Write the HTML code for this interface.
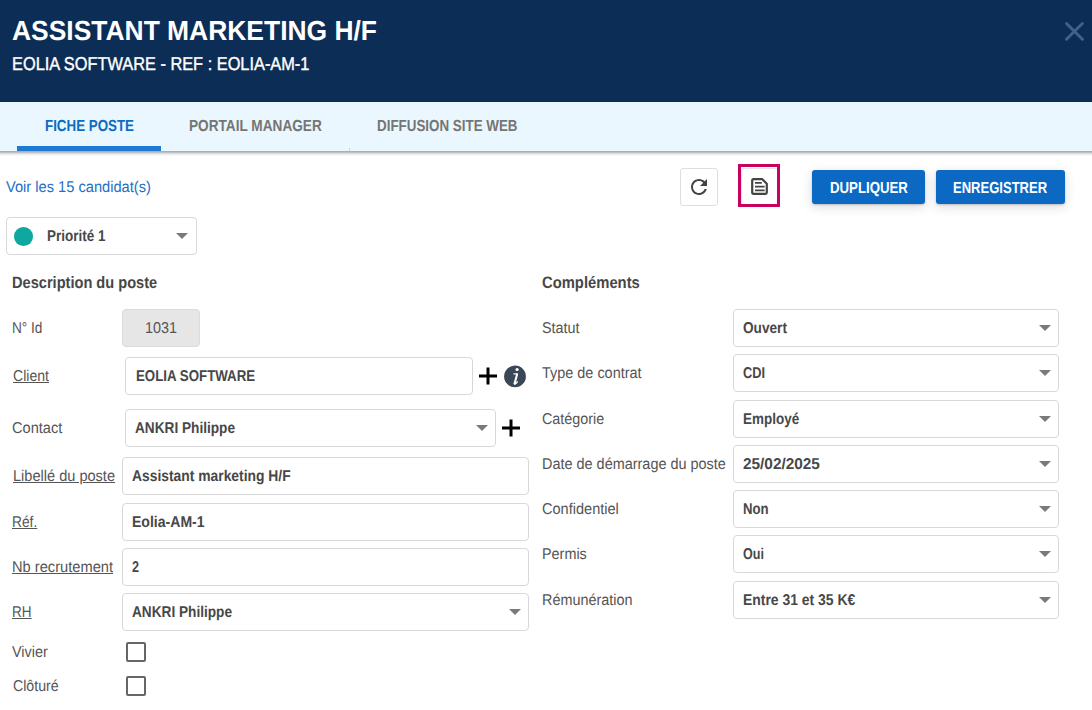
<!DOCTYPE html>
<html><head><meta charset="utf-8">
<style>
*{box-sizing:border-box;margin:0;padding:0}
html,body{width:1092px;height:710px;overflow:hidden;background:#fff;font-family:"Liberation Sans",sans-serif;color:#444;text-rendering:geometricPrecision}
.a{position:absolute;white-space:nowrap;transform-origin:0 0;line-height:normal}
#hdr{position:absolute;left:0;top:0;width:1092px;height:102px;background:#0c2d55}
#tabs{position:absolute;left:0;top:102px;width:1092px;height:49px;background:#eaf7fe}
#tabshadow{position:absolute;left:0;top:151px;width:1092px;height:5px;background:linear-gradient(#aaaaaa 0,#b4b4b4 22%,#e4e4e4 55%,#fff 100%)}
#ul{position:absolute;left:17px;top:146px;width:144px;height:5px;background:#1f7ad6}
#tdiv{position:absolute;left:349px;top:148px;width:1px;height:3px;background:#d3d3d3}
.box{position:absolute;border:1px solid #d8d8d8;border-radius:4px;background:#fff}
.caret{position:absolute;width:0;height:0;border-left:6px solid transparent;border-right:6px solid transparent;border-top:6px solid #7a7a7a}
.btn{position:absolute;background:#0b69c4;border-radius:3px;box-shadow:0 1px 2px rgba(0,0,0,.18),0 3px 12px rgba(0,0,0,.14)}
.chk{position:absolute;width:20px;height:20px;border:2px solid #666;border-radius:2px}
</style></head><body>
<div id="hdr"></div>
<div class="a t" id="title" style="left:12.00px;top:15px;font-size:27.5px;font-weight:bold;color:#fff;transform:scaleX(0.9608);">ASSISTANT MARKETING H/F</div>
<div class="a t" id="sub" style="left:12.01px;top:53px;font-size:18.7px;font-weight:normal;color:#fff;transform:scaleX(0.8750);-webkit-text-stroke:0.4px #fff;">EOLIA SOFTWARE - REF : EOLIA-AM-1</div>
<svg class="a" style="left:1060px;top:16px" width="30" height="30" viewBox="0 0 30 30"><path d="M6.5 7.5L22.4 23.2M22.4 7.5L6.5 23.2" stroke="#3f618c" stroke-width="3" stroke-linecap="round" fill="none"/></svg>
<div id="tabs"></div><div id="tabshadow"></div><div id="ul"></div><div id="tdiv"></div>
<div class="a t" id="tab1" style="left:45.00px;top:118px;font-size:16px;font-weight:bold;color:#0e6bc2;transform:scaleX(0.8344);">FICHE POSTE</div>
<div class="a t" id="tab2" style="left:189.19px;top:118px;font-size:16px;font-weight:bold;color:#757575;transform:scaleX(0.8518);">PORTAIL MANAGER</div>
<div class="a t" id="tab3" style="left:377.43px;top:118px;font-size:16px;font-weight:bold;color:#757575;transform:scaleX(0.8362);">DIFFUSION SITE WEB</div>
<div class="a t" id="voir" style="left:5.81px;top:179px;font-size:15.6px;font-weight:normal;color:#1e70c4;transform:scaleX(0.9388);">Voir les 15 candidat(s)</div>
<div class="box" style="left:680px;top:168px;width:38px;height:38px;border-color:#dedede;border-radius:3px"></div>
<svg class="a" style="left:687px;top:174.5px" width="24" height="24" viewBox="0 0 24 24"><path fill="#444" d="M17.65 6.35C16.2 4.9 14.21 4 12 4c-4.42 0-7.99 3.58-7.99 8s3.57 8 7.99 8c3.730 0 6.84-2.55 7.73-6h-2.08c-.82 2.33-3.04 4-5.65 4-3.31 0-6-2.69-6-6s2.69-6 6-6c1.66 0 3.14.69 4.22 1.78L13 11h7V4l-2.35 2.35z"/></svg>
<div class="box" style="left:741px;top:168px;width:38px;height:38px;border-color:#dfe6e6;border-radius:3px"></div>
<div class="a" style="left:738px;top:164px;width:42px;height:43px;border:3px solid #c8005e"></div>
<svg class="a" style="left:751px;top:178px" width="17" height="17" viewBox="0 0 17 17"><path d="M2.2 1.2H11.3L15.8 5.7V14.6Q15.8 15.8 14.6 15.8H2.4Q1.2 15.8 1.2 14.6V2.4Q1.2 1.2 2.4 1.2Z" fill="none" stroke="#444" stroke-width="2.2" stroke-linejoin="round"/><path d="M4 4.9H10.8M4 8.6H13.6M4 12.4H13.6" stroke="#444" stroke-width="1.6"/></svg>
<div class="btn" style="left:812px;top:170px;width:113px;height:34px"></div>
<div class="btn" style="left:936px;top:170px;width:129px;height:34px"></div>
<div class="a t" id="dup" style="left:829.82px;top:180px;font-size:16px;font-weight:bold;color:#fff;transform:scaleX(0.8259);">DUPLIQUER</div>
<div class="a t" id="enr" style="left:952.78px;top:180px;font-size:16px;font-weight:bold;color:#fff;transform:scaleX(0.8144);">ENREGISTRER</div>
<div class="box" style="left:6px;top:217px;width:191px;height:38px"></div>
<div class="a" style="left:14.2px;top:227.2px;width:18.5px;height:18.5px;border-radius:50%;background:#0fa89e"></div>
<div class="a t" id="prio" style="left:47.00px;top:228px;font-size:15.6px;font-weight:bold;color:#474747;transform:scaleX(0.8646);">Priorité 1</div>
<div class="caret" style="left:176px;top:233px"></div>
<div class="a t" id="desc" style="left:12.41px;top:274px;font-size:16.5px;font-weight:bold;color:#474747;transform:scaleX(0.8848);">Description du poste</div>
<div class="a t" id="comp" style="left:542.40px;top:274px;font-size:16.5px;font-weight:bold;color:#474747;transform:scaleX(0.8964);">Compléments</div>
<div class="a t" id="l_id" style="left:12.40px;top:320px;font-size:15.6px;font-weight:normal;color:#555;transform:scaleX(0.8741);">N° Id</div>
<div class="box" style="left:122px;top:309px;width:78px;height:38px;background:#e6e6e6;border-color:#dcdcdc"></div>
<div class="a t" id="v_id" style="left:144.59px;top:320px;font-size:15.6px;font-weight:normal;color:#555;transform:scaleX(0.9243);">1031</div>
<div class="a t" id="l_cli" style="left:12.61px;top:368px;font-size:15.6px;font-weight:normal;color:#555;transform:scaleX(0.9027);text-decoration:underline;">Client</div>
<div class="box" style="left:125px;top:357px;width:348px;height:38px"></div>
<div class="a t" id="v_cli" style="left:135.58px;top:368px;font-size:15.6px;font-weight:bold;color:#474747;transform:scaleX(0.8529);">EOLIA SOFTWARE</div>
<svg class="a" style="left:478px;top:366px" width="20" height="20" viewBox="0 0 20 20"><path d="M10 1.5V18.5M1 10H19" stroke="#000" stroke-width="3"/></svg>
<svg class="a" style="left:504px;top:365px" width="22" height="23" viewBox="0 0 22 23"><circle cx="11" cy="11.4" r="10.9" fill="#3b4757"/><circle cx="13.1" cy="4.5" r="1.6" fill="#fff"/><path d="M13.1 9.2L10.6 18.6" stroke="#fff" stroke-width="2.1" stroke-linecap="round"/><path d="M9.4 8.9H13.4" stroke="#fff" stroke-width="1.2"/><path d="M10.5 18.3Q10.5 20.2 13.4 16.9" stroke="#fff" stroke-width="1.4" fill="none" stroke-linecap="round"/></svg>
<div class="a t" id="l_con" style="left:12.39px;top:420px;font-size:15.6px;font-weight:normal;color:#555;transform:scaleX(0.9350);">Contact</div>
<div class="box" style="left:125px;top:409px;width:371px;height:38px"></div>
<div class="a t" id="v_con" style="left:135.19px;top:420px;font-size:15.6px;font-weight:bold;color:#474747;transform:scaleX(0.8747);">ANKRI Philippe</div>
<div class="caret" style="left:476px;top:425px"></div>
<svg class="a" style="left:501px;top:418px" width="20" height="20" viewBox="0 0 20 20"><path d="M10 1.5V18.5M1 10H19" stroke="#000" stroke-width="3"/></svg>
<div class="a t" id="l_lib" style="left:12.61px;top:468px;font-size:15.6px;font-weight:normal;color:#555;transform:scaleX(0.9337);text-decoration:underline;">Libellé du poste</div>
<div class="box" style="left:122px;top:457px;width:407px;height:38px"></div>
<div class="a t" id="v_lib" style="left:132.20px;top:468px;font-size:15.6px;font-weight:bold;color:#474747;transform:scaleX(0.8888);">Assistant marketing H/F</div>
<div class="a t" id="l_ref" style="left:12.40px;top:514px;font-size:15.6px;font-weight:normal;color:#555;transform:scaleX(0.8830);text-decoration:underline;">Réf.</div>
<div class="box" style="left:122px;top:503px;width:407px;height:38px"></div>
<div class="a t" id="v_ref" style="left:132.20px;top:514px;font-size:15.6px;font-weight:bold;color:#474747;transform:scaleX(0.9013);">Eolia-AM-1</div>
<div class="a t" id="l_nb" style="left:12.40px;top:559px;font-size:15.6px;font-weight:normal;color:#555;transform:scaleX(0.9399);text-decoration:underline;">Nb recrutement</div>
<div class="box" style="left:122px;top:548px;width:407px;height:38px"></div>
<div class="a t" id="v_nb" style="left:132.16px;top:559px;font-size:15.6px;font-weight:bold;color:#474747;transform:scaleX(0.8141);">2</div>
<div class="a t" id="l_rh" style="left:12.40px;top:604px;font-size:15.6px;font-weight:normal;color:#555;transform:scaleX(0.8668);text-decoration:underline;">RH</div>
<div class="box" style="left:122px;top:593px;width:407px;height:38px"></div>
<div class="a t" id="v_rh" style="left:132.19px;top:604px;font-size:15.6px;font-weight:bold;color:#474747;transform:scaleX(0.8747);">ANKRI Philippe</div>
<div class="caret" style="left:509px;top:609px"></div>
<div class="a t" id="l_viv" style="left:12.40px;top:644px;font-size:15.6px;font-weight:normal;color:#555;transform:scaleX(0.9257);">Vivier</div>
<div class="chk" style="left:126px;top:642px"></div>
<div class="a t" id="l_clo" style="left:12.79px;top:678px;font-size:15.6px;font-weight:normal;color:#555;transform:scaleX(0.9081);">Clôturé</div>
<div class="chk" style="left:126px;top:676px"></div>
<div class="a t" id="l_stat" style="left:541.82px;top:320px;font-size:15.6px;font-weight:normal;color:#555;transform:scaleX(0.9221);">Statut</div>
<div class="box" style="left:733px;top:309px;width:326px;height:38px"></div>
<div class="a t" id="v_stat" style="left:742.78px;top:320px;font-size:15.6px;font-weight:bold;color:#474747;transform:scaleX(0.8749);">Ouvert</div>
<div class="caret" style="left:1039px;top:325px"></div>
<div class="a t" id="l_type" style="left:541.80px;top:365px;font-size:15.6px;font-weight:normal;color:#555;transform:scaleX(0.9260);">Type de contrat</div>
<div class="box" style="left:733px;top:354px;width:326px;height:38px"></div>
<div class="a t" id="v_type" style="left:742.80px;top:365px;font-size:15.6px;font-weight:bold;color:#474747;transform:scaleX(0.8219);">CDI</div>
<div class="caret" style="left:1039px;top:370px"></div>
<div class="a t" id="l_cat" style="left:541.80px;top:411px;font-size:15.6px;font-weight:normal;color:#555;transform:scaleX(0.9192);">Catégorie</div>
<div class="box" style="left:733px;top:400px;width:326px;height:38px"></div>
<div class="a t" id="v_cat" style="left:742.79px;top:411px;font-size:15.6px;font-weight:bold;color:#474747;transform:scaleX(0.8634);">Employé</div>
<div class="caret" style="left:1039px;top:416px"></div>
<div class="a t" id="l_date" style="left:541.80px;top:456px;font-size:15.6px;font-weight:normal;color:#555;transform:scaleX(0.9262);">Date de démarrage du poste</div>
<div class="box" style="left:733px;top:445px;width:326px;height:38px"></div>
<div class="a t" id="v_date" style="left:742.82px;top:456px;font-size:15.6px;font-weight:bold;color:#474747;transform:scaleX(0.9851);">25/02/2025</div>
<div class="caret" style="left:1039px;top:461px"></div>
<div class="a t" id="l_conf" style="left:541.81px;top:501px;font-size:15.6px;font-weight:normal;color:#555;transform:scaleX(0.9328);">Confidentiel</div>
<div class="box" style="left:733px;top:490px;width:326px;height:38px"></div>
<div class="a t" id="v_conf" style="left:742.81px;top:501px;font-size:15.6px;font-weight:bold;color:#474747;transform:scaleX(0.8442);">Non</div>
<div class="caret" style="left:1039px;top:506px"></div>
<div class="a t" id="l_perm" style="left:541.81px;top:546px;font-size:15.6px;font-weight:normal;color:#555;transform:scaleX(0.9227);">Permis</div>
<div class="box" style="left:733px;top:535px;width:326px;height:38px"></div>
<div class="a t" id="v_perm" style="left:742.77px;top:546px;font-size:15.6px;font-weight:bold;color:#474747;transform:scaleX(0.8070);">Oui</div>
<div class="caret" style="left:1039px;top:551px"></div>
<div class="a t" id="l_rem" style="left:541.80px;top:592px;font-size:15.6px;font-weight:normal;color:#555;transform:scaleX(0.9235);">Rémunération</div>
<div class="box" style="left:733px;top:581px;width:326px;height:38px"></div>
<div class="a t" id="v_rem" style="left:742.80px;top:592px;font-size:15.6px;font-weight:bold;color:#474747;transform:scaleX(0.8936);">Entre 31 et 35 K€</div>
<div class="caret" style="left:1039px;top:597px"></div>
</body></html>
